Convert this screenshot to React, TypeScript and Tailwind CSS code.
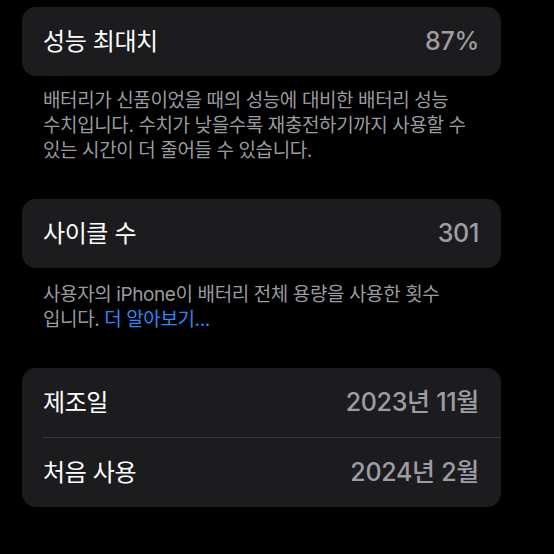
import React from "react";

const font = { fontFamily: 'Inter, "Noto Sans CJK KR", sans-serif' };

function Row({ label, value }: { label: string; value: string }) {
  return (
    <div className="flex items-center justify-between h-[69px] pl-[21px] pr-[22px]">
      <span className="text-[24px] font-normal text-white tracking-[-0.4px]">{label}</span>
      <span className="text-[25px] font-medium text-[#9d9da3] tracking-[-0.3px]">{value}</span>
    </div>
  );
}

export default function App() {
  return (
    <div className="w-[554px] h-[554px] bg-black overflow-hidden pt-[7px]" style={font}>
      <div className="mx-[22px] w-[479px] rounded-[14px] bg-[#1c1c1e]">
        <Row label="성능 최대치" value="87%" />
      </div>
      <p className="ml-[43px] mt-[12px] text-[19px] leading-[25px] text-[#9a9aa0] tracking-[-0.4px] whitespace-nowrap">
        배터리가 신품이었을 때의 성능에 대비한 배터리 성능
        <br />
        수치입니다. 수치가 낮을수록 재충전하기까지 사용할 수
        <br />
        있는 시간이 더 줄어들 수 있습니다.
      </p>
      <div className="mx-[22px] w-[479px] rounded-[14px] bg-[#1c1c1e] mt-[36px]">
        <Row label="사이클 수" value="301" />
      </div>
      <p className="ml-[43px] mt-[14px] text-[19px] leading-[25px] text-[#9a9aa0] tracking-[-0.4px] whitespace-nowrap">
        사용자의 iPhone이 배터리 전체 용량을 사용한 횟수
        <br />
        입니다. <span className="text-[#2f87f2]">더 알아보기...</span>
      </p>
      <div className="mx-[22px] w-[479px] rounded-[14px] bg-[#1c1c1e] mt-[36px]">
        <Row label="제조일" value="2023년 11월" />
        <div className="ml-[21px] h-px bg-[#38383a]" />
        <Row label="처음 사용" value="2024년 2월" />
      </div>
    </div>
  );
}
